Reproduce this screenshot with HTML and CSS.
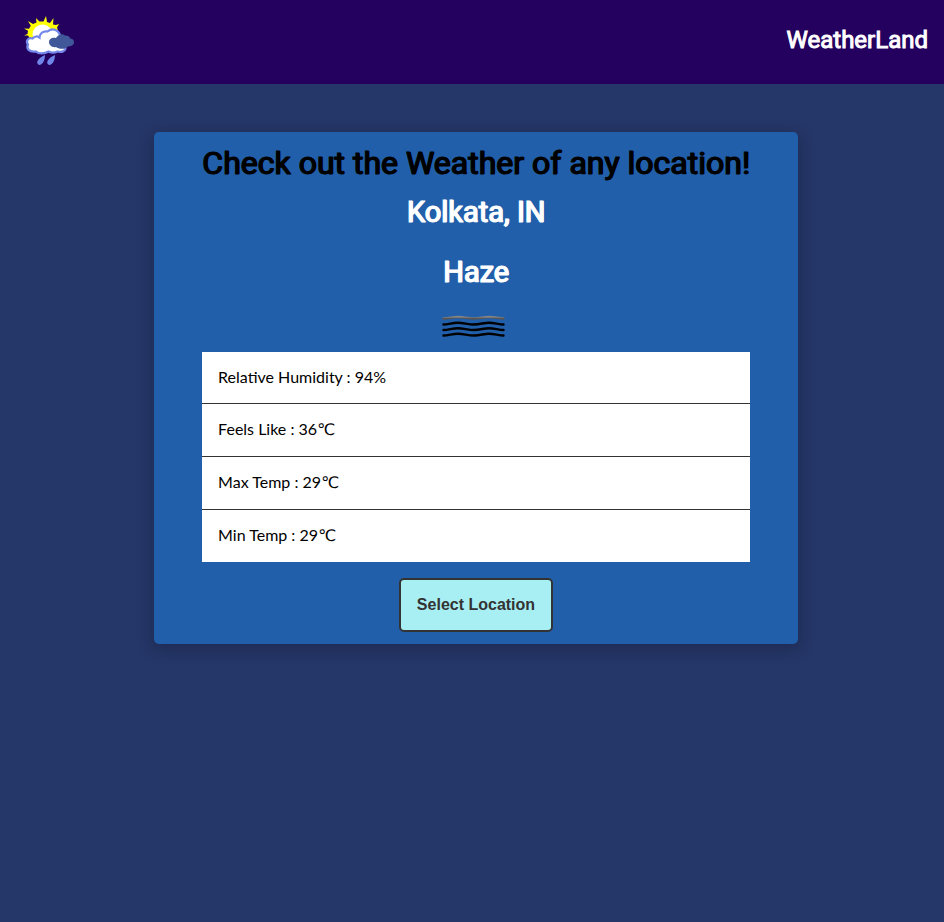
FILE: index.html
```html
<!DOCTYPE html>
<html lang="en">
<head>
<meta charset="utf-8">
<meta name="viewport" content="width=device-width, initial-scale=1">
<title>WeatherLand</title>
<link rel="stylesheet" href="styles.css">
</head>
<body>
<header class="navbar">
  <svg class="logo" viewBox="0 0 70 64" aria-hidden="true">
    <path fill="#ff0" d="M10 27.500l3.500-1.500.5-3.200-4-2.300 5 .3 1.800-3L14 13l5 3 3.500-1.500-.5-4.500 3.500 3.500h4L32 8l1 6 3 1 3.500-5-.5 6.500 3 .5 3-1-2 3.500 1 3-28 8-2-3z"/>
    <circle cx="28.500" cy="26.500" r="10" fill="#fff"/>
    <path fill="#fff" stroke="#7388ea" stroke-width="2.200" d="M22 43.500c-7 1-10-3-8-7-3-4 1-7.500 4.500-6 2-2.500 5-2.500 7-1 0-4 4-7 8-6 5-4 12-2 13 6l5 10c0 4-4 5-8 4-4 2-7 1-9 0-4 2.500-10 2.500-12.500 0z"/>
    <path fill="#405799" d="M42 39c-4 1-7-2-7-5s3-5 7-4c2-3 6-5 9-2.500 3 0 5 1 5 3 3 0 4 2 4 4 0 3-4 4-6 4-3 3-9 3-12 .5z"/>
    <path fill="#6f85e8" d="M31 47c0 5-2 9.500-6 10-4-2-1-7 6-10zM41 47c0 5-2 9.500-6 10-4-2-1-7 6-10z"/>
  </svg>
  <h2 class="brand">WeatherLand</h2>
</header>
<main class="content">
  <section class="card">
    <h1 class="title">Check out the Weather of any location!</h1>
    <h2 class="place">Kolkata, IN</h2>
    <h2 class="condition">Haze</h2>
    <svg class="haze" viewBox="0 0 66 24" aria-hidden="true">
      <defs>
        <linearGradient id="fade" x1="0" y1="0" x2="0" y2="1">
          <stop offset="0" stop-color="#858585"/>
          <stop offset="1" stop-color="#555"/>
        </linearGradient>
      </defs>
      <g fill="none" stroke="#000" stroke-width="2.400" stroke-linecap="round">
        <path stroke="url(#fade)" d="M3.500 4.500C9 4.500 13 3 18 3s10 1.500 16 1.500S44 3 49 3s10 1.500 14.500 1.500"/>
        <path d="M3.500 10.500c5 0 9-1.800 14.500-1.800s10 1.800 16 1.800 10-1.800 15-1.800 10 1.800 14.500 1.800"/>
        <path d="M3.500 16c5 0 9-1.800 14.500-1.800s10 1.800 16 1.800 10-1.800 15-1.800 10 1.800 14.500 1.800"/>
        <path d="M3.500 21.500c5 0 9-1.800 14.500-1.800s10 1.800 16 1.800 10-1.800 15-1.800 10 1.800 14.500 1.800"/>
      </g>
    </svg>
    <ul class="details">
      <li>Relative Humidity : 94%</li>
      <li>Feels Like : 36℃</li>
      <li>Max Temp : 29℃</li>
      <li>Min Temp : 29℃</li>
    </ul>
    <button class="select" type="button">Select Location</button>
  </section>
</main>
</body>
</html>
```
FILE: styles.css
```css
* {
  box-sizing: border-box;
  margin: 0;
  padding: 0;
}

body {
  min-height: 100vh;
  background: #253668;
  font-family: Lato, "DejaVu Sans", sans-serif;
  font-size: 16px;
}

h1,
h2 {
  font-family: Roboto, sans-serif;
  font-weight: 400;
  -webkit-text-stroke: 1px currentColor;
}

.navbar {
  display: flex;
  justify-content: space-between;
  align-items: flex-start;
  height: 84px;
  padding: 8px 16px 8px 14px;
  background: #24005f;
}

.logo {
  width: 70px;
  height: 64px;
}

.brand {
  padding-top: 16px;
  color: #fff;
  font-size: 24px;
  line-height: 32px;
}

.content {
  display: flex;
  justify-content: center;
  padding: 48px 0 48px 8px;
}

.card {
  display: flex;
  flex-direction: column;
  align-items: center;
  padding: 12px 48px;
  border-radius: 5px;
  background: #225fab;
  box-shadow: 0 4px 16px 2px rgba(0, 0, 0, 0.2);
  text-align: center;
}

.title {
  font-size: 32px;
  line-height: 38px;
  text-shadow: 1px 0 0 currentColor;
}

.place,
.condition {
  color: #fff;
  font-size: 29px;
  line-height: 34px;
  text-shadow: 1px 0 0 currentColor;
}

.place {
  margin-top: 13px;
}

.condition {
  margin-top: 26px;
}

.haze {
  width: 66px;
  height: 24px;
  margin: 25px 6px 14px 0;
}

.details {
  align-self: stretch;
  background: #fff;
  list-style: none;
  text-align: left;
}

.details li {
  padding: 15px 16px 17px;
}

.details li + li {
  border-top: 1px solid #333;
}

.select {
  margin-top: 16px;
  padding: 16px;
  border: 2px solid #333;
  border-radius: 5px;
  background: #a8eff4;
  color: #333;
  font: bold 16px "Liberation Sans", sans-serif;
}
```
